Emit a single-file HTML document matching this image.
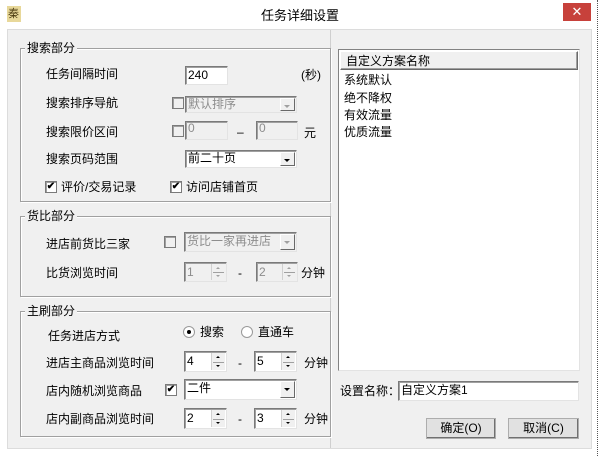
<!DOCTYPE html>
<html><head><meta charset="utf-8"><style>
*{margin:0;padding:0;box-sizing:border-box}
body{width:600px;height:456px;background:#fff;position:relative;overflow:hidden;font-family:"Liberation Sans","Noto Sans CJK SC","WenQuanYi Zen Hei",sans-serif;font-size:12px;color:#000}
.a{position:absolute}
.t{position:absolute;line-height:14px;white-space:nowrap}
.grp{position:absolute;border:1px solid #a0a0a0;box-shadow:1px 1px 0 #fff inset,1px 1px 0 #fff}
.lg{position:absolute;background:#f0f0f0;padding:0 2px;line-height:14px;top:-8px;left:4px}
.in{position:absolute;background:#fff;border:1px solid #7a7a7a;border-right-color:#e3e3e3;border-bottom-color:#e3e3e3;box-shadow:inset 1px 1px 0 #a0a0a0;line-height:16px;padding-left:2px;font-size:12px}
.dis{background:#f0f0f0;color:#8d8d8d}
.cb{position:absolute;width:12px;height:12px;border:1px solid #7a7a7a;background:#fff;box-shadow:inset 1px 1px 0 #a0a0a0;font-size:10px;line-height:10px;text-align:center;font-weight:bold}
.cbd{background:#f0f0f0}
.btn{position:absolute;right:1px;top:1px;bottom:1px;width:15px;background:#f0f0f0;border:1px solid #fff;border-right-color:#696969;border-bottom-color:#696969}
.btn:after{content:"";position:absolute;left:3px;top:6px;border-left:3px solid transparent;border-right:3px solid transparent;border-top:3px solid #000}
.dis .btn:after{border-top-color:#a0a0a0}
.sp{position:absolute;right:1px;top:1px;bottom:1px;width:14px;background:#f0f0f0;border-left:1px solid #d0d0d0}
.sp:before{content:"";position:absolute;left:4px;top:3px;border-left:2px solid transparent;border-right:2px solid transparent;border-bottom:2px solid #000}
.sp:after{content:"";position:absolute;left:4px;bottom:3px;border-left:2px solid transparent;border-right:2px solid transparent;border-top:2px solid #000}
.sp i{position:absolute;left:1px;right:1px;top:50%;border-top:1px solid #a0a0a0}
.dis .sp:before{border-bottom-color:#a0a0a0}.dis .sp:after{border-top-color:#a0a0a0}
.pb{position:absolute;background:#e1e1e1;border:1px solid #adadad;box-shadow:inset -1px -1px 0 #707070;text-align:center;line-height:18px}
</style></head><body>
<!-- title -->
<div class="a" style="left:7px;top:6px;width:14px;height:16px;background:#e8d89a"></div>
<div class="t" style="left:8px;top:7px;font-size:11px;color:#4a3a10">秦</div>
<div class="t" style="left:0;width:600px;text-align:center;top:8px;font-size:13px;line-height:15px">任务详细设置</div>
<div class="a" style="left:563px;top:3px;width:28px;height:18px;background:#c7413b;color:#fff;text-align:center;line-height:17px;font-size:13px">✕</div>
<div class="a" style="left:597px;top:0;width:1px;height:456px;border-left:1px dotted #555"></div>
<!-- body panel -->
<div class="a" style="left:7px;top:29px;width:585px;height:420px;background:#f0f0f0;border:1px solid #dcdcdc"></div>
<div class="a" style="left:7px;top:30px;width:324px;height:418px;border-right:1px solid #cfcfcf"></div>

<!-- group 1 -->
<div class="grp" style="left:20px;top:48px;width:311px;height:154px"><div class="lg">搜索部分</div></div>
<div class="t" style="left:46px;top:67px">任务间隔时间</div>
<div class="in" style="left:185px;top:66px;width:43px;height:19px">240</div>
<div class="t" style="left:301px;top:68px">(秒)</div>
<div class="t" style="left:46px;top:96px">搜索排序导航</div>
<div class="cb cbd" style="left:172px;top:97px"></div>
<div class="in dis" style="left:185px;top:96px;width:112px;height:17px;line-height:14px">默认排序<div class="btn"></div></div>
<div class="t" style="left:46px;top:125px">搜索限价区间</div>
<div class="cb cbd" style="left:172px;top:125px"></div>
<div class="in dis" style="left:185px;top:121px;width:43px;height:19px;line-height:12px">0</div>
<div class="t" style="left:237px;top:125px">–</div>
<div class="in dis" style="left:256px;top:121px;width:42px;height:19px;line-height:12px">0</div>
<div class="t" style="left:304px;top:126px">元</div>
<div class="t" style="left:46px;top:152px">搜索页码范围</div>
<div class="in" style="left:185px;top:150px;width:112px;height:18px;line-height:15px">前二十页<div class="btn"></div></div>
<div class="cb" style="left:45px;top:181px">✔</div>
<div class="t" style="left:61px;top:180px">评价/交易记录</div>
<div class="cb" style="left:170px;top:181px">✔</div>
<div class="t" style="left:186px;top:180px">访问店铺首页</div>

<!-- group 2 -->
<div class="grp" style="left:20px;top:216px;width:311px;height:81px"><div class="lg">货比部分</div></div>
<div class="t" style="left:46px;top:237px">进店前货比三家</div>
<div class="cb cbd" style="left:164px;top:236px"></div>
<div class="in dis" style="left:184px;top:232px;width:113px;height:20px">货比一家再进店<div class="btn"></div></div>
<div class="t" style="left:46px;top:266px">比货浏览时间</div>
<div class="in dis" style="left:184px;top:262px;width:43px;height:20px;line-height:18px">1<div class="sp"><i></i></div></div>
<div class="t" style="left:238px;top:266px">-</div>
<div class="in dis" style="left:256px;top:262px;width:42px;height:20px;line-height:18px">2<div class="sp"><i></i></div></div>
<div class="t" style="left:301px;top:266px">分钟</div>

<!-- group 3 -->
<div class="grp" style="left:20px;top:311px;width:311px;height:126px"><div class="lg">主刷部分</div></div>
<div class="t" style="left:48px;top:329px">任务进店方式</div>
<div class="a" style="left:183px;top:326px;width:12px;height:12px;border-radius:50%;border:1px solid #999;background:#fff"></div>
<div class="a" style="left:187px;top:330px;width:4px;height:4px;border-radius:50%;background:#000"></div>
<div class="t" style="left:200px;top:325px">搜索</div>
<div class="a" style="left:241px;top:326px;width:12px;height:12px;border-radius:50%;border:1px solid #999;background:#fff"></div>
<div class="t" style="left:258px;top:325px">直通车</div>
<div class="t" style="left:46px;top:356px">进店主商品浏览时间</div>
<div class="in" style="left:184px;top:351px;width:43px;height:21px;line-height:19px">4<div class="sp"><i></i></div></div>
<div class="t" style="left:238px;top:356px">-</div>
<div class="in" style="left:254px;top:351px;width:43px;height:21px;line-height:19px">5<div class="sp"><i></i></div></div>
<div class="t" style="left:304px;top:356px">分钟</div>
<div class="t" style="left:46px;top:384px">店内随机浏览商品</div>
<div class="cb" style="left:165px;top:384px">✔</div>
<div class="in" style="left:184px;top:379px;width:113px;height:21px;line-height:17px">二件<div class="btn"></div></div>
<div class="t" style="left:46px;top:412px">店内副商品浏览时间</div>
<div class="in" style="left:184px;top:408px;width:43px;height:21px;line-height:19px">2<div class="sp"><i></i></div></div>
<div class="t" style="left:238px;top:412px">-</div>
<div class="in" style="left:254px;top:408px;width:43px;height:21px;line-height:19px">3<div class="sp"><i></i></div></div>
<div class="t" style="left:304px;top:412px">分钟</div>

<!-- list -->
<div class="a" style="left:338px;top:49px;width:242px;height:322px;background:#fff;border:1px solid #828282;border-right-color:#e3e3e3;border-bottom-color:#e3e3e3"></div>
<div class="a" style="left:340px;top:51px;width:238px;height:19px;background:#f0f0f0;border:1px solid #696969;border-top-color:#fff;border-left-color:#fff;box-shadow:inset -1px -1px 0 #a0a0a0"></div>
<div class="t" style="left:346px;top:54px">自定义方案名称</div>
<div class="t" style="left:344px;top:73px">系统默认</div>
<div class="t" style="left:344px;top:91px">绝不降权</div>
<div class="t" style="left:344px;top:108px">有效流量</div>
<div class="t" style="left:344px;top:125px">优质流量</div>

<div class="t" style="left:340px;top:384px">设置名称：</div>
<div class="in" style="left:398px;top:381px;width:181px;height:20px;line-height:16px">自定义方案1</div>
<div class="pb" style="left:426px;top:418px;width:70px;height:21px">确定(O)</div>
<div class="pb" style="left:508px;top:418px;width:71px;height:21px">取消(C)</div>
</body></html>
